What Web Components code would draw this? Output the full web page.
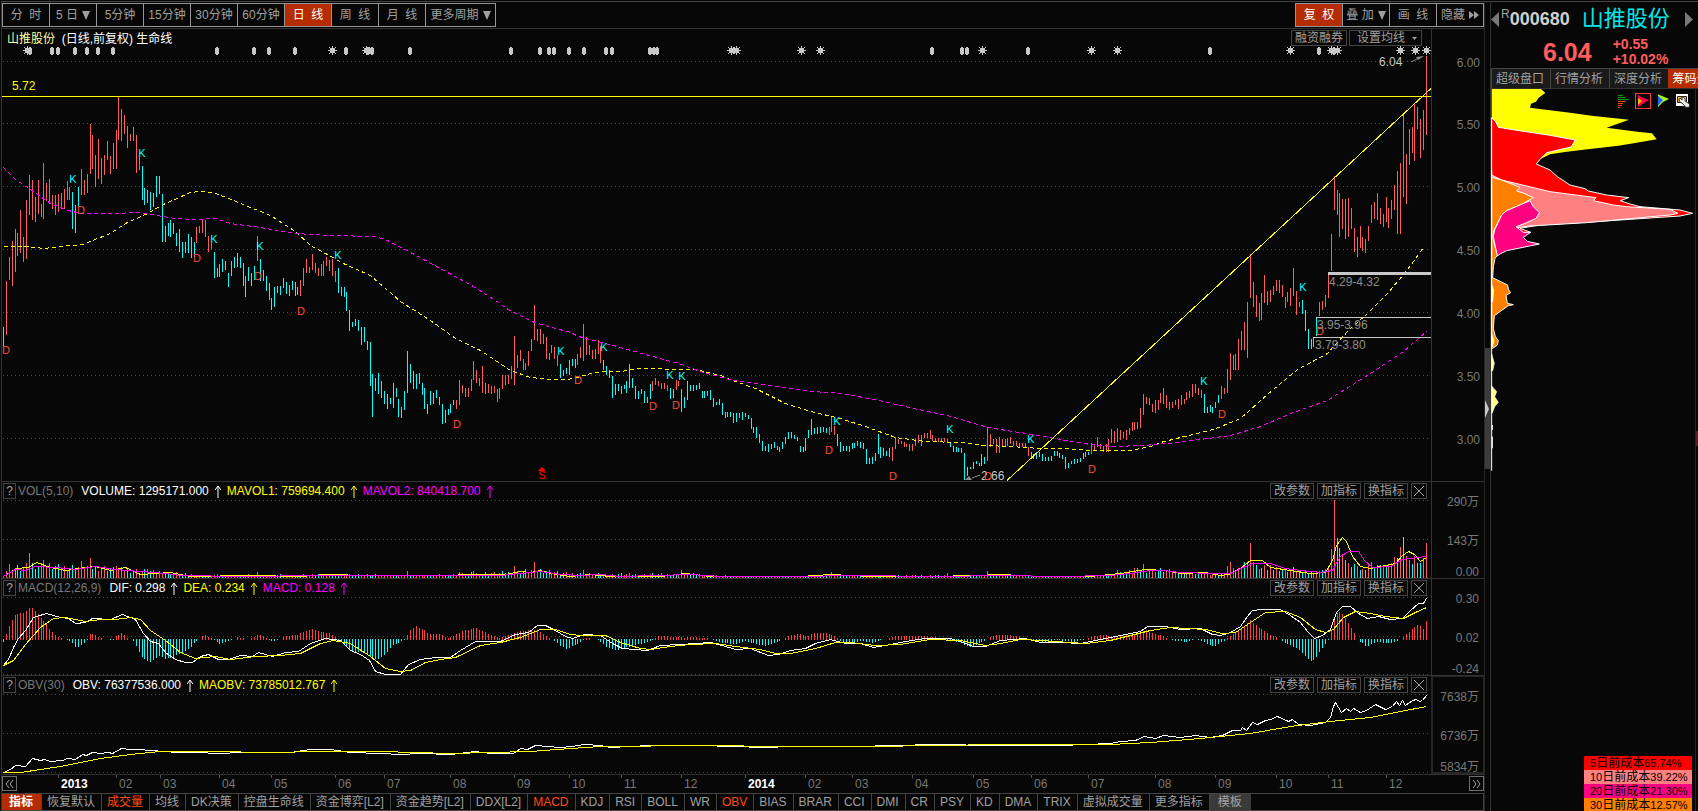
<!DOCTYPE html>
<html lang="zh-CN">
<head>
<meta charset="utf-8">
<title>山推股份 000680 日线</title>
<style>
html,body{margin:0;height:100%;background:#070707;overflow:hidden}
body{font:12px/14px "Liberation Sans","Noto Sans CJK SC",sans-serif;color:#a0a0a0}
</style>
</head>
<body>
<stock-terminal></stock-terminal>
<script>
const RESET = `*{box-sizing:border-box}button,a{font:inherit;color:inherit}button{margin:0;padding:0;cursor:pointer}`;
function define(name, css, render) {
  customElements.define(name, class extends HTMLElement {
    constructor() {
      super();
      this.attachShadow({ mode: 'open' });
    }
    connectedCallback() {
      this.shadowRoot.innerHTML = `<style>${RESET}${css}</style>${render(this)}`;
    }
  });
}

/* ---------- chart data ---------- */
const PRICE = `C 327 347 R 281 335 257 280 241 286 229 272 233 256 210 253 237 262 200 259 175 215 180 220 197 222 180 214 204 217 163 219 183 201 179 204 195 209 195 215 194 212 193 209 189 209 181 200 187 200
C 192 229 205 233 187 206 R 169 195 180 195 174 193 124 174 135 169 155 187 139 179 158 184 155 175 141 160 156 174 143 169 130 169 97 140 109 141 115 134 126 148 134 141 127 141 135 173 157 170
C 166 200 188 205 190 203 192 210 193 207 176 197 176 194 194 242 226 242 223 236 220 237 223 234 233 246 229 252 242 258 242 253 234 253 237 258 242 257
R 227 243 226 233 220 233 220 237 236 252 243 249 C 252 278 268 277 264 277 259 272 261 270 273 287 261 276 257 268 253 267 257 268 263 286 276 297 267 281 273 286 266 280 R 236 261
C 259 281 270 281 276 291 283 300 298 310 287 307 286 293 286 295 278 288 282 294 285 296 281 290 282 296 287 295 R 280 296 268 286 259 273 267 273 254 270 263 273 268 276 264 276 261 276 257 266 260 271 259 276 271 282
C 268 293 287 296 287 297 292 311 310 331 322 327 319 326 320 331 327 345 327 342 341 350 342 386 374 417 378 391 373 394 381 398 391 404 394 409 398 404 383 408 388 397 399 417 407 418 391 410 351 393 364 383 371 389 374 389 373 384 383 395 388 409 404 414 391 405 393 404 390 398 397 405 404 424 410 423 409 415 404 413 400 405
R 400 409 380 405 385 393 388 397 388 397 379 391 361 380 370 383 378 386 366 393 383 394 384 393 386 394 386 393 389 402 388 399 375 389 375 385 375 384 366 379 336 385 355 368 350 361 359 370 363 370 351 366 339 351 305 340 329 341 329 344 334 344 337 359 353 360 345 353 347 359 355 366
C 364 378 370 376 368 374 360 375 359 366 359 368 R 354 365 347 358 324 361 337 355 345 355 350 359 349 359 340 354 346 363 C 360 370 366 375 370 378 376 398 384 395 384 391 386 394 385 389 381 393 364 388 378 388 386 399 391 399 389 394 391 403 397 403 384 399
R 381 391 378 385 381 386 383 389 383 389 385 391 C 388 399 389 398 R 380 390 381 386 C 389 412 397 408 381 400 385 391 385 391 385 390 383 389 391 398 391 398 391 396 390 400 398 407 402 405 399 405 403 415 412 418 412 417 412 417 413 423 413 422 413 418 412 420 413 417 415 419 418 429 427 433 427 438 434 443 441 451 446 451 444 452 444 449 442 448 446 450 447 452 442 449 437 444 432 439 432 438 435 439 437 441 446 452 447 452 438 451 430 438 419 435 428 434 427 434 427 433 427 432 428 433
R 427 435 417 432 426 435 C 434 446 442 452 446 451 446 451 446 452 443 449 443 448 441 446 442 448 443 449 449 464 458 464 457 464 453 461 434 454 447 458 448 456 451 456 448 457
R 447 461 437 449 439 444 441 444 442 447 444 447 444 451 444 451 439 446 435 443 435 446 433 438 433 438 430 439 435 441 438 441 438 442 438 442 438 442 439 442
C 442 447 446 452 447 452 448 452 448 453 453 480 467 476 467 469 462 469 461 464 463 466 454 466 457 464 R 427 461 434 447 439 444 439 453 437 453 439 447 439 447 438 446 437 444 441 446 441 446 443 447 443 447 443 448 447 456
C 452 458 454 459 452 459 452 457 454 461 457 461 457 461 456 461 451 456 451 456 453 458 455 459 457 469 463 468 461 464 459 464 459 463 458 462 453 459 452 457 452 455
R 443 454 444 450 437 447 444 449 446 452 444 452 439 452 429 443 431 443 428 442 430 440 432 438 430 440 428 435 422 431 422 430 422 429 408 428 394 415 397 404 398 405 404 412 400 413 400 410 393 403 388 404 395 408 402 410 402 408 400 405 399 409 395 405 399 404 392 400 391 398 384 397 384 393 388 395 390 398
C 394 413 407 413 405 412 407 413 402 408 395 403 R 386 399 388 394 369 393 353 380 355 370 354 370 339 370 331 350 322 350 302 358 254 298 282 307 295 317 303 321 293 320 275 303 291 305 290 302 286 295 280 291 280 293 285 297 297 308 292 302 288 306 268 296 291 315 302 307
C 300 314 310 331 329 349 339 349 337 347 317 336 R 302 316 301 310 295 307 274 298 234 271 176 210 190 215 193 237 199 229 199 239 198 237 208 229 228 252 237 257 226 248 237 251 239 253 226 241 205 223 202 219 193 220 208 224 214 227 197 222 208 228 200 219 185 210 171 234 163 234 115 197 154 204 129 165 127 153 104 161 107 129 119 158 110 150 56 135`;
const MA_YELLOW = '3,246 24,246 44,248 60,246 82,244 92,240 110,233 125,223 145,214 165,203 190,192 200,191 213,192 228,198 250,207 270,215 295,231 310,245 325,253 345,264 370,275 400,301 430,320 455,338 480,350 510,370 530,377 550,379 567,379 577,377 590,373 605,371 620,371 640,368 655,368 670,369 695,369 720,375 735,381 755,388 785,403 810,411 840,418 865,426 895,437 925,441 960,442 985,445 1010,446 1040,448 1065,448 1090,450 1130,450 1150,446 1160,442 1180,437 1213,429 1240,418 1267,394 1297,369 1327,353 1333,346 1350,328 1367,313 1387,293 1404,273 1413,261 1423,247';
const MA_MAGENTA = '3,167 15,179 30,189 50,203 68,210 80,213 110,213 140,212 150,214 175,218 195,219 215,218 230,223 260,227 295,233 330,235 375,236 387,240 412,253 449,273 473,286 498,302 509,310 534,322 570,332 578,336 605,343 645,354 678,363 703,372 733,380 762,384 812,391 842,393 878,400 918,409 951,416 987,427 1038,435 1060,439 1090,444 1113,446 1143,445 1167,443 1200,439 1230,435 1260,426 1293,412 1327,400 1370,373 1403,351 1426,331';
const K_MARKS = [[73,179],[142,153],[214,239],[260,246],[338,255],[561,351],[604,347],[670,375],[682,376],[837,421],[950,429],[1031,439],[1204,381],[1303,287]];
const D_MARKS = [[81,210],[197,258],[6,350],[258,276],[301,311],[457,424],[578,380],[653,406],[676,405],[829,450],[893,476],[988,476],[1092,469],[1222,414],[1320,331]];
const STARS = [27,332,366,731,736,801,820,982,1091,1117,1290,1331,1337,1400,1415,1426];
const DIAMONDS = [30,52,58,75,87,98,113,217,254,269,295,346,368,372,410,511,540,549,554,569,584,606,612,650,654,657,932,962,967,1028,1210,1319,1334];
const VOL_LEVEL = [[3,4],[9,13],[20,10],[35,15],[60,11],[90,12],[110,10],[125,9],[150,7],[175,5],[200,3],[300,3],[320,4],[370,3],[440,3],[480,5],[510,6],[540,9],[560,5],[600,4],[690,4],[730,2],[830,2],[960,3],[1020,2],[1090,2],[1120,5],[1140,9],[1165,8],[1180,6],[1220,4]];
const VOL_SPIKES = {9:25,14:18,27:17,30:20,39:12,50:9,88:6,134:2,140:7,158:6,163:7,177:12,184:16,201:8,235:8,287:6,327:5,341:7,386:8,392:10,395:14};
const VOL_TAIL = 'R12 R16 R10 C8 R10 R11 C16 R16 R35 R16 C13 R9 C10 R13 C8 R13 C8 R11 C7 C9 R8 C6 R9 C11 R7 C8 C5 R7 C5 C6 R4 R7 R7 C8 R9 R10 R29 R78 C40 C30 R24 C18 R15 C11 C14 R12 C8 R9 C8 R13 R16 C11 C13 C13 R12 C12 R14 R15 R21 C20 R31 C41 R22 R18 C14 R22 C15 C15 R20 R35'.split(' ');
const MAVOL1 = '3,576 16,568 28,567 36,562 50,567 65,570 85,567 95,566 110,570 125,567 140,574 170,572 190,576 250,575 300,576 325,574 370,575 400,575 440,575 475,574 505,574 520,571 530,572 540,570 550,573 570,576 590,574 610,576 660,576 685,573 710,576 800,576 830,574 870,576 930,576 975,575 1000,574 1040,576 1090,576 1120,573 1145,569 1165,570 1180,573 1205,572 1220,575 1228,574 1240,568 1250,560 1262,560 1270,567 1290,570 1310,573 1325,572 1332,560 1336,545 1342,537 1346,541 1352,556 1360,566 1370,568 1395,563 1402,555 1408,551 1414,554 1420,561 1426,557';
const MAVOL2 = '3,576 15,569 25,570 35,566 55,567 75,569 95,566 115,569 140,571 165,573 180,575 240,576 320,575 380,575 440,575 500,575 520,573 540,571 560,574 580,575 600,574 620,576 690,574 720,576 800,576 850,575 940,576 1000,575 1060,576 1110,575 1130,573 1150,570 1163,570 1180,572 1215,573 1230,573 1245,566 1252,563 1270,563 1285,568 1300,570 1320,572 1332,570 1340,556 1348,551 1358,551 1364,560 1372,567 1390,566 1402,559 1426,556';
const MACD_HIST = [[3,-3],[6,5],[9,13],[14,23],[18,26],[22,25],[26,28],[30,32],[33,31],[36,27],[40,22],[45,16],[50,9],[55,4],[59,1],[65,0],[70,-2],[76,-9],[82,-6],[88,0],[90,5],[94,4],[100,1],[106,0],[112,-2],[116,3],[122,6],[127,1],[133,-2],[138,-11],[143,-20],[150,-23],[155,-20],[160,-16],[165,-20],[172,-18],[180,-15],[190,-9],[197,-1],[204,4],[213,0],[219,-5],[228,-2],[238,2],[245,0],[252,1],[258,5],[265,2],[272,-3],[280,0],[285,3],[297,4],[302,7],[312,10],[320,7],[330,6],[336,1],[342,-4],[350,-12],[365,-14],[377,-21],[385,-15],[392,-7],[402,-2],[406,0],[408,7],[415,13],[424,9],[428,5],[440,5],[447,1],[455,4],[463,8],[475,11],[485,7],[492,3],[500,1],[510,5],[520,8],[533,9],[540,7],[548,1],[554,-2],[560,-7],[567,-10],[575,-6],[582,-2],[585,1],[597,0],[607,-9],[617,-11],[627,-8],[640,-5],[652,-1],[658,3],[678,2],[684,1],[690,2],[705,1],[713,-1],[722,-4],[735,-5],[745,-2],[755,-5],[765,-7],[775,-4],[783,0],[790,4],[800,5],[806,2],[812,6],[825,6],[835,3],[840,-2],[850,-4],[862,-2],[872,-4],[880,-1],[886,0],[895,3],[925,3],[940,1],[948,-1],[960,-4],[970,-8],[980,-4],[987,0],[995,4],[1010,4],[1020,2],[1030,-1],[1045,-3],[1057,-1],[1075,-3],[1088,1],[1100,4],[1115,3],[1130,4],[1145,9],[1155,5],[1165,2],[1170,-1],[1185,-3],[1195,0],[1203,-3],[1213,-8],[1225,-1],[1230,3],[1240,9],[1250,19],[1258,12],[1270,4],[1278,1],[1285,-4],[1298,-10],[1310,-22],[1314,-21],[1322,-9],[1329,0],[1333,18],[1338,28],[1343,24],[1350,13],[1357,0],[1366,-8],[1375,-3],[1390,-4],[1398,-2],[1403,2],[1412,10],[1418,15],[1423,10],[1426,18]];
const DIF = '3,665 8,659 13,647 18,638 25,630 33,617 46,613 60,617 68,618 75,623 85,622 92,618 110,619 122,614 135,619 143,633 150,641 158,643 165,652 175,659 185,662 192,662 200,656 208,654 218,659 228,659 240,655 252,656 258,652 272,656 285,652 298,651 310,643 325,638 340,640 350,650 360,654 369,660 375,671 385,674 400,674 408,664 420,659 435,657 450,657 460,650 475,641 500,641 515,634 528,632 537,625 545,625 555,630 565,636 572,638 584,634 600,635 612,643 622,648 647,650 660,645 680,644 710,642 722,645 735,649 750,648 768,655 778,654 790,650 805,648 815,643 830,639 845,643 860,643 873,647 890,644 905,641 925,638 950,638 965,643 973,646 985,646 1000,640 1025,638 1040,642 1060,642 1080,643 1100,639 1115,636 1130,633 1140,631 1147,626 1165,626 1180,629 1200,628 1212,634 1220,635 1230,632 1240,626 1247,616 1252,610 1262,609 1280,609 1290,615 1300,622 1307,631 1314,638 1322,635 1330,629 1336,612 1342,606 1350,606 1358,613 1367,618 1378,616 1390,619 1402,618 1410,610 1418,603 1423,603 1426,598';
const DEA = '3,665 13,660 25,644 40,627 53,618 65,617 85,621 100,619 115,619 130,617 140,619 150,630 165,640 180,652 195,658 215,656 230,659 255,656 280,655 300,653 320,643 333,640 350,643 370,656 385,668 400,671 410,670 425,662 440,659 455,657 480,645 500,642 520,637 540,629 555,629 570,634 580,635 605,635 620,642 640,648 650,649 670,646 690,644 715,643 735,646 760,649 775,653 790,653 815,648 835,642 850,642 875,645 900,644 930,639 960,640 985,645 1000,643 1020,639 1040,640 1085,643 1110,640 1130,635 1150,630 1170,627 1205,629 1222,633 1235,632 1250,622 1265,612 1285,611 1300,617 1315,629 1325,632 1333,629 1343,617 1355,611 1370,613 1385,616 1403,618 1415,612 1426,607';
const OBV = '3,772 10,769 15,765 25,766 32,758 36,759 40,760 44,759 50,761 62,760 67,758 75,759 82,754 86,755 92,752 100,753 108,752 112,753 121,748 130,749 138,749 150,750 165,751 175,752 195,752 220,753 240,752 290,752 310,749 330,749 350,752 380,753 400,754 420,753 450,754 475,751 490,753 513,753 520,748 527,749 535,745 560,747 572,746 584,744 600,745 610,747 650,745 700,745 765,747 790,746 850,746 900,745 930,744 1000,745 1060,745 1110,743 1120,741 1135,740 1144,736 1155,738 1163,735 1180,737 1195,735 1210,737 1222,735 1232,730 1240,730 1242,727 1246,730 1252,722 1257,724 1265,720 1270,719 1277,716 1288,721 1292,719 1298,724 1310,725 1325,722 1330,717 1333,706 1335,702 1338,707 1341,712 1346,708 1350,711 1353,708 1360,712 1366,710 1375,704 1385,709 1392,706 1396,701 1399,705 1402,700 1405,705 1412,700 1416,699 1419,701 1422,700 1426,695';
const MAOBV = '3,772 20,772 60,766 100,758 130,754 160,751 210,751 270,752 320,751 380,751 450,753 530,751 570,748 600,746 700,745 785,746 870,746 1000,744 1110,744 1150,742 1200,738 1250,733 1290,726 1330,721 1370,717 1400,711 1426,706';
const MONTHS = [[58,'2013'],[116,'02'],[160,'03'],[219,'04'],[271,'05'],[335,'06'],[384,'07'],[450,'08'],[514,'09'],[569,'10'],[621,'11'],[681,'12'],[745,'2014'],[805,'02'],[852,'03'],[912,'04'],[973,'05'],[1031,'06'],[1088,'07'],[1155,'08'],[1215,'09'],[1276,'10'],[1328,'11'],[1386,'12']];

/* ---------- chart helpers ---------- */
const UP = '#ff5c5c', DOWN = '#00ffff';
const X0 = 2, W = 1429, BARS = 494;
const barX = i => Math.round(3 + i * 1423 / (BARS - 1));
const px = x => ((x - X0) / W * 100).toFixed(3) + '%';
const bar = (x, top, bottom) => `M${x} ${top}h1V${bottom}h-1z`;
const paths = (up, down, upColor = UP) => `<path d="${up}" fill="${upColor}"/><path d="${down}" fill="${DOWN}"/>`;
const line = (points, color, extra = '') => `<polyline points="${points}" transform="translate(0.5 0.5)" fill="none" stroke="${color}" ${extra}/>`;
const grid = ys => ys.map(y => `<path d="M3 ${y}.5H1431" stroke="#4c4c4c" stroke-dasharray="1 3"/>`).join('');
function level(anchors, x) {
  const k = anchors.findIndex(a => a[0] >= x);
  if (k < 0) return anchors[anchors.length - 1][1];
  if (k === 0) return anchors[0][1];
  const [xa, a] = anchors[k - 1], [xb, b] = anchors[k];
  return a + (b - a) * (x - xa) / (xb - xa);
}
function priceBars() {
  let color = 'C', i = 0, high = null;
  const d = { R: '', C: '' };
  for (const t of PRICE.split(/\s+/)) {
    if (t === 'R' || t === 'C') color = t;
    else if (high === null) high = t;
    else { d[color] += bar(barX(i++), high, t); high = null; }
  }
  return paths(d.R, d.C);
}
function volumeBars() {
  const d = { R: '', C: '' };
  for (let i = 0; i < BARS; i++) {
    let c = (i * 7919 % 13) < 7 ? 'R' : 'C', h;
    if (i >= 424) { c = VOL_TAIL[i - 424][0]; h = +VOL_TAIL[i - 424].slice(1); }
    else if (VOL_SPIKES[i]) { h = VOL_SPIKES[i]; c = 'R'; }
    else h = Math.max(2, Math.round(level(VOL_LEVEL, barX(i)) * (0.6 + (i * 37 % 11) / 16)));
    d[c] += bar(barX(i), 578 - h, 578);
  }
  return paths(d.R, d.C);
}
function macdBars() {
  let up = '', down = '';
  for (let i = 0; i < BARS; i++) {
    const x = barX(i), v = Math.round(level(MACD_HIST, x));
    if (v > 0) up += bar(x, 639 - v, 640);
    if (v < 0) down += bar(x, 639, 639 - v);
  }
  return paths(up, down, '#ff4040');
}
const ARROW = '<svg class="up" width="6" height="13" viewBox="0 0 6 13" fill="none" stroke="currentColor" aria-hidden="true"><path d="M3 13V1M0 5L3 1L6 5"/></svg>';
const CARET = '<svg width="8" height="9" viewBox="0 0 8 9" fill="currentColor" aria-hidden="true"><path d="M0 0H8L4 9z"/></svg>';

/* ---------- components ---------- */
define('tool-button', `
:host{display:block;flex:none;width:48px;height:24px;margin-right:-1px}
:host([wide]){width:71px}
:host([active]){z-index:1}
button{width:100%;height:100%;display:flex;align-items:center;justify-content:center;gap:4px;background:none;border:1px solid #969696;white-space:pre}
:host([active]) button{background:#b42c00;color:#fff}
`, el => `<button type="button"><slot></slot>${el.hasAttribute('menu') ? CARET : ''}${el.hasAttribute('more') ? '<svg width="10" height="8" viewBox="0 0 10 8" fill="currentColor" aria-hidden="true"><path d="M0 0L5 4L0 8zM5 0L10 4L5 8z"/></svg>' : ''}</button>`);

define('tool-bar', `
:host{display:flex;justify-content:space-between;height:26px;padding-top:1px}
nav{display:flex;padding-right:1px}
`, () => `<nav><tool-button>分  时</tool-button><tool-button menu>5 日</tool-button><tool-button>5分钟</tool-button><tool-button>15分钟</tool-button><tool-button>30分钟</tool-button><tool-button>60分钟</tool-button><tool-button active>日  线</tool-button><tool-button>周  线</tool-button><tool-button>月  线</tool-button><tool-button wide menu>更多周期</tool-button></nav>
<nav><tool-button active>复  权</tool-button><tool-button menu>叠 加</tool-button><tool-button>画  线</tool-button><tool-button more>隐藏</tool-button></nav>`);

define('price-chart', `
:host{display:grid;grid-template:minmax(0,1fr) / minmax(0,1fr) 53px;border-top:1px solid #333;min-height:0}
.plot{display:grid;grid-template:100% / 100%;min-height:0}
.plot>*{grid-area:1/1}
svg{display:block;width:100%;height:100%;min-height:0;overflow:visible}
.lines{shape-rendering:crispEdges;overflow:hidden}
header{display:flex;justify-content:space-between;align-items:start;align-self:start;padding:1px 9px 0 5px;z-index:1}
h1{margin:0;font:inherit;line-height:19px;color:#fff}
h1 b{font-weight:normal;color:#ffffa0}
.tools{display:flex;gap:2px}
.tools button{height:16px;border:1px solid #444;background:#070707;line-height:14px;padding:0 3px;display:flex;align-items:center;gap:7px}
.tools button+button{padding:0 4px 0 7px}
.axis{border-left:1px solid #333;min-height:0}
text{font-size:12px}
`, () => {
  const py = y => ((y - 29) / 452 * 100).toFixed(3) + '%';
  const text = (x, y, s, color) => `<text x="${px(x)}" y="${py(y + 4)}" fill="${color}">${s}</text>`;
  const mark = (x, y, s, color) => `<text x="${px(x)}" y="${py(y + 4)}" text-anchor="middle" fill="${color}" style="font-size:11px">${s}</text>`;
  const ys = [61, 123, 186, 249, 312, 375, 438];
  const diamonds = DIAMONDS.map(x => `<path d="M${x} 46L${x + 2} 49V53L${x} 56L${x - 2} 53V49z"/>`).join('');
  const stars = STARS.map(x => `<path d="M${x - 2} 48H${x + 3}V53H${x - 2}zM${x} 46h1v9h-1zM${x - 4} 50h9v1h-9zM${x - 3} 47h1v1h-1zM${x + 3} 47h1v1h-1zM${x - 3} 53h1v1h-1zM${x + 3} 53h1v1h-1z"/>`).join('');
  return `<section class="plot"><svg class="lines" viewBox="2 29 1429 452" preserveAspectRatio="none" aria-label="日线走势图">
${grid(ys)}<g fill="#c8c8c8">${diamonds}${stars}</g>
${priceBars()}
${line(MA_YELLOW, '#ffff00', 'stroke-dasharray="4 3"')}${line(MA_MAGENTA, '#ff00ff', 'stroke-dasharray="4 3"')}
<path d="M2 96h1429v1H2z" fill="#ffff00"/>
<path d="M1007 480.500L1431 88.500" stroke="#ffff00" fill="none"/>
<path d="M1328 272h103v3h-103zM1316 317h115v1h-115zM1314 337h117v1h-117z" fill="#c8c8c8"/>
</svg>
<svg aria-hidden="true">${text(12, 86, '5.72', '#ffff00')}${text(1379, 62, '6.04', '#c8c8c8')}${text(981, 476, '2.66', '#c8c8c8')}
${text(1329, 282, '4.29-4.32', '#8c8c8c')}${text(1317, 325, '3.95-3.96', '#8c8c8c')}${text(1315, 345, '3.79-3.80', '#8c8c8c')}
${K_MARKS.map(m => mark(m[0], m[1], 'K', '#00ffff')).join('')}${D_MARKS.map(m => mark(m[0], m[1], 'D', '#ff4a3c')).join('')}${mark(542, 475, 'S', '#ff0000')}</svg>
<svg viewBox="2 29 1429 452" preserveAspectRatio="none" aria-hidden="true"><path d="M1411 62L1419 58M980 475L972 478" stroke="#8c8c8c"/><path d="M1424 56L1418 60L1416 57zM965 480L969 476L972 480z" fill="#8c8c8c"/><path d="M542 467L546 471H538z" fill="#f00"/></svg>
<header><h1><b>山推股份</b>&nbsp; (日线,前复权) 生命线</h1><span class="tools"><button type="button">融资融券</button><button type="button">设置均线 <svg style="width:5px;height:3px" viewBox="0 0 5 3" fill="currentColor" aria-hidden="true"><path d="M0 0H5L2.500 3z"/></svg></button></span></header></section>
<aside class="axis"><svg>${ys.map((y, i) => `<text x="48" y="${py(y + 6)}" text-anchor="end" fill="#787878">${(6 - i / 2).toFixed(2)}</text>`).join('')}</svg></aside>`;
});

const PANELS = {
  vol: { title: 'VOL(5,10)', top: 481, height: 97, values: [['VOLUME: 1295171.000', '#fff'], ['MAVOL1: 759694.400', '#ffff00'], ['MAVOL2: 840418.700', '#ff00ff']],
    ys: [500, 539, 577], labels: ['290万', '143万', '0.00'], draw: () => volumeBars() + line(MAVOL1, '#ffff00') + line(MAVOL2, '#ff00ff') },
  macd: { title: 'MACD(12,26,9)', top: 578, height: 97, values: [['DIF: 0.298', '#fff'], ['DEA: 0.234', '#ffff00'], ['MACD: 0.128', '#ff00ff']],
    ys: [597, 636, 674], labels: ['0.30', '0.02', '-0.24'], draw: () => macdBars() + line(DIF, '#fff') + line(DEA, '#ffff00') },
  obv: { title: 'OBV(30)', top: 675, height: 99, values: [['OBV: 76377536.000', '#fff'], ['MAOBV: 73785012.767', '#ffff00']],
    ys: [694, 733, 772], labels: ['7638万', '6736万', '5834万'], draw: () => line(OBV, '#fff') + line(MAOBV, '#ffff00') }
};
define('indicator-panel', `
:host{display:grid;grid-template:minmax(0,1fr) / minmax(0,1fr) 53px;height:97px;border-top:1px solid #333}
:host([kind=obv]){height:99px}
.main{display:grid;grid-template:18px minmax(0,1fr) / minmax(0,1fr);min-width:0;min-height:0}
header{display:flex;align-items:center;height:18px;padding:0 4px 0 1px;gap:3px;white-space:nowrap}
header button{height:16px;border:1px solid #444;background:none;padding:0 3px;line-height:14px}
header .help{width:13px;padding:0}
header .x{width:16px;padding:0;display:grid;place-items:center}
h2{margin:0 5px 0 -1px;font:inherit;color:#787878}
.values{flex:1;display:flex;gap:6px}
.values span{display:flex;align-items:center;gap:6px}
.plot{display:block;min-height:0;width:100%;height:100%;shape-rendering:crispEdges}
.axis{border-left:1px solid #333;min-height:0}
:host([kind=obv]) .axis{border:2px solid #262626;border-width:1px 1px 2px 2px}
.axis svg{display:block;width:100%;height:100%;overflow:visible}
text{font-size:12px}
`, el => {
  const p = PANELS[el.getAttribute('kind')], start = p.top + 19;
  const centers = [p.top + 21, p.top + 60, p.top + 91];
  return `<section class="main"><header><button type="button" class="help">?</button><h2>${p.title}</h2><span class="values">${p.values.map(v => `<span style="color:${v[1]}">${v[0]} ${ARROW}</span>`).join('')}</span>
<button type="button">改参数</button><button type="button">加指标</button><button type="button">换指标</button><button type="button" class="x" aria-label="关闭"><svg width="10" height="10" viewBox="0 0 10 10" stroke="currentColor"><path d="M0 0L10 10M10 0L0 10"/></svg></button></header>
<svg class="plot" viewBox="2 ${start} 1429 ${p.height - 19}" preserveAspectRatio="none" aria-label="${p.title}">${grid(p.ys)}${p.draw()}</svg></section>
<aside class="axis"><svg>${p.labels.map((t, i) => `<text x="${p.height === 99 ? 46 : 47}" y="${centers[i] - p.top + 3}" text-anchor="end" fill="#787878">${t}</text>`).join('')}</svg></aside>`;
});

define('time-axis', `
:host{display:grid;grid-template:18px / 15px minmax(0,1fr) 15px;border-top:1px solid #333;height:19px}
svg.scale{grid-area:1/1/2/4;width:calc(100% - 53px);height:18px}
button{width:15px;height:15px;margin-top:1px;border:1px solid #6e6e6e;background:#070707;display:grid;place-items:center;z-index:1}
.prev{grid-area:1/1}.next{grid-area:1/3}
text{font-size:12px}
`, () => `<svg class="scale">${MONTHS.map(([x, t]) => `<svg x="${px(x)}" width="40" height="18"><path d="M0 0h1v3h-1z" fill="#555"/><text x="3" y="13" ${t.length > 2 ? 'fill="#fff" font-weight="bold"' : 'fill="#787878"'}>${t}</text></svg>`).join('')}</svg>
<button type="button" class="prev" aria-label="向前"><svg width="9" height="8" viewBox="0 0 9 8" fill="none" stroke="#a0a0a0"><path d="M4 0L1 4L4 8M8 0L5 4L8 8"/></svg></button>
<button type="button" class="next" aria-label="向后"><svg width="9" height="8" viewBox="0 0 9 8" fill="none" stroke="#a0a0a0"><path d="M1 0L4 4L1 8M5 0L8 4L5 8"/></svg></button>`);

define('tab-strip', `
:host{display:block;height:18px}
nav{display:flex;height:18px;border:1px solid #444;border-left:0}
button{flex:none;height:16px;border:0;border-right:1px solid #444;background:none;padding:1px 6px 0 5px;line-height:15px}
.on{color:#ff4a10}
.active{background:#b42c00;color:#fff;font-weight:bold;padding:1px 8px 0 7px}
.pressed{background:#3a3a3a;border:0;padding:1px 9px 0 8px}
`, () => {
  const cls = { '指标': 'active', '成交量': 'on', 'MACD': 'on', 'OBV': 'on', '模板': 'pressed' };
  return `<nav>${['指标','恢复默认','成交量','均线','DK决策','控盘生命线','资金博弈[L2]','资金趋势[L2]','DDX[L2]','MACD','KDJ','RSI','BOLL','WR','OBV','BIAS','BRAR','CCI','DMI','CR','PSY','KD','DMA','TRIX','虚拟成交量','更多指标','模板'].map(t => `<button type="button" class="${cls[t] || ''}">${t}</button>`).join('')}</nav>`;
});

define('chip-profile', `
:host{display:grid;grid-template:auto 1fr auto / minmax(0,1fr);border-right:1px solid #262626;min-height:0;overflow:hidden}
.icons{grid-area:1/1;justify-self:end;display:flex;align-items:center;gap:4px;padding:4px 4px 0 0;z-index:1}
.icons button{width:16px;height:16px;border:1px solid transparent;background:none;display:grid;place-items:center}
.icons .sel{border-color:#ff3c3c}
.chips{grid-area:1/1/4/2;width:205px;height:722px}
ul{grid-area:3/1;justify-self:end;margin:0 3px -1px 0;padding:0;list-style:none;width:108px;color:#000;z-index:1}
li{height:14px;line-height:14px;padding-left:6px;white-space:nowrap}
li span{font-size:11px}
`, () => `<svg class="chips" viewBox="153 267 615 2166" stroke-linejoin="round" aria-label="筹码分布">
<path fill="#ffff00" d="M155 267H303L316 279L296 293L288 305L273 311L270 323L390 338L455 347L567 359L500 383L592 395L636 400L650 418L590 428L535 437L430 449L375 456L330 463L300 478L155 480z"/>
<g stroke="#fff" stroke-width="3">
<path fill="#ff0000" d="M155 353L168 366L175 382L225 390L330 406L406 420L393 441L320 458L300 478L289 492L330 510L352 530L390 555L435 566L445 573L500 585L566 593L541 602L570 612L600 620L720 630L758 640L720 648L660 652L480 664L300 675L240 685L272 697L155 700z"/>
<path fill="#ff8080" d="M155 525L185 540L330 575L468 593L460 602L520 615L560 620L690 628L714 640L690 645L440 668L270 678L228 683L155 690z"/>
<path fill="#ff8000" d="M155 532L185 540L240 562L230 573L252 580L280 593L245 613L200 632L185 645L162 690L158 710L165 740L173 765L165 775L160 800L158 833L203 855L205 868L212 878L198 886L202 910L220 914L205 917L163 947L160 985L166 1010L175 1022L172 1035L158 1045H155z"/>
<path fill="#ff0080" d="M270 602L280 620L298 638L288 655L255 670L228 680L250 697L272 697L250 712L262 724L298 732L200 752L180 762L172 768L160 710L164 690L185 645L200 632L245 613z"/>
<path fill="#ffff80" stroke-width="2" d="M155 855L161 870L158 905H155zM155 1000L162 1020L158 1040H155zM155 1062L163 1090L158 1112H155zM155 1158L170 1175L164 1190L175 1207L164 1220L156 1240z"/>
<path fill="none" d="M155 510V1412M157 1275V1290M157 1310V1345"/></g></svg>
<div class="icons">
<button type="button" aria-label="筹码一"><svg width="12" height="14" viewBox="0 0 12 14" shape-rendering="crispEdges"><path d="M0 0h1v14h-1z" fill="#0000a0"/><path d="M1 1h5v1h-5zM1 3h8v1h-8zM1 5h11v1h-11z" fill="#009a00"/><path d="M1 7h8v1h-8zM1 9h5v1h-5zM1 11h4v1h-4zM1 13h2v1h-2z" fill="#f04810"/></svg></button>
<button type="button" class="sel" aria-label="筹码二"><svg width="12" height="14" viewBox="0 0 12 14"><path d="M0 0L4 3L12 6L4 11L0 14z" fill="#ff0050"/><path d="M0 3L5 7L0 12z" fill="#ffb000"/><path d="M0 0h1v14h-1z" fill="#0000a0"/></svg></button>
<button type="button" aria-label="筹码三"><svg width="12" height="14" viewBox="0 0 12 14"><path d="M0 0L5 2L12 5L6 8L0 14z" fill="#a0ff10"/><path d="M0 1L6 6L0 13z" fill="#2860ff"/><path d="M0 0h1v14h-1z" fill="#0000a0"/></svg></button>
<button type="button" aria-label="设置"><svg width="14" height="14" viewBox="0 0 14 14"><path d="M0 0H12V12H0z" fill="#fff"/><path d="M1.500 2.500H10.500V8.500H1.500z" fill="#ffb030" stroke="#222"/><path d="M4 4A3 3 0 0 0 6 9L10 13.500L13.500 13V10L9 7A3 3 0 0 0 6 3V6z" fill="#e8e8e8" stroke="#333"/></svg></button></div>
<ul><li style="background:#f00"><span>5</span>日前成本<span>65.74%</span></li><li style="background:#ff8080"><span>10</span>日前成本<span>39.22%</span></li><li style="background:#ff0080"><span>20</span>日前成本<span>21.30%</span></li><li style="background:#ff8000"><span>30</span>日前成本<span>12.57%</span></li></ul>`);

define('quote-panel', `
:host{display:grid;grid-template:66px 21px minmax(0,1fr) / minmax(0,1fr);border-left:1px solid #333;min-width:0}
.head{display:grid;grid-template:34px 32px / 8px 1fr 8px;padding-right:5px;align-items:center}
.head>button{border:0;background:none;height:15px;display:block}
.head svg{display:block}
h1{margin:0;display:flex;align-items:center;font-weight:normal;white-space:nowrap;line-height:24px}
sup{font-size:12px;line-height:14px;align-self:start;margin-left:2px}
h1 b{font-size:18px;color:#d0d0d0}
h1 span{font-size:22px;color:#00e8e8;margin-left:12px}
.price{grid-column:1/4;display:flex;align-items:center;gap:21px;color:#ff5c5c;font-weight:bold;padding-left:52px}
.price strong{font-size:25px;line-height:28px}
.price span{font-size:14px;line-height:15px}
nav{display:flex;overflow:hidden;border-top:1px solid #444;border-bottom:1px solid #333}
nav button{flex:none;width:59px;border:0;border-left:1px solid #444;background:#1a1a1a;padding-right:2px}
nav .on{background:#b42c00;color:#fff;border:0}
.body{display:grid;grid-template:100% / minmax(0,1fr) 1px;padding-right:1px}
.body i{width:2px;height:15px;background:#5a2020;margin-top:342px}
`, () => `<section class="head"><button type="button" aria-label="上一只"><svg width="8" height="15" viewBox="0 0 8 15" fill="#787878"><path d="M8 0V15L0 7.500z"/></svg></button>
<h1><sup>R</sup><b>000680</b><span>山推股份</span></h1>
<button type="button" aria-label="下一只"><svg width="8" height="15" viewBox="0 0 8 15" fill="#787878"><path d="M0 0V15L8 7.500z"/></svg></button>
<div class="price"><strong>6.04</strong><span>+0.55<br>+10.02%</span></div></section>
<nav><button type="button">超级盘口</button><button type="button">行情分析</button><button type="button">深度分析</button><button type="button" class="on">筹码分布</button></nav>
<div class="body"><chip-profile></chip-profile><i></i></div>`);

define('side-splitter', `
:host{display:grid;grid-template-rows:346fr 121px 342fr}
div{grid-row:2;background:#3c3c3c;display:flex;align-items:center}
`, () => `<div><svg width="4" height="18" viewBox="0 0 4 18" fill="#c8c8c8" aria-hidden="true"><path d="M0 0L4 9L0 18z"/></svg></div>`);

define('stock-terminal', `
:host{display:grid;grid-template-columns:minmax(0,1fr) 5px 208px;grid-template-rows:minmax(0,1fr);height:100vh;padding-top:1px;box-sizing:border-box}
.left{display:grid;grid-template-columns:minmax(0,1fr);grid-template-rows:26px minmax(0,1fr) auto auto auto 19px 18px;margin-left:1px;border-left:1px solid #333;border-right:1px solid #262626;border-top:1px solid #444;min-height:0}
side-splitter,quote-panel{border-top:1px solid #444;min-height:0;box-sizing:border-box}
`, () => `<main class="left"><tool-bar></tool-bar><price-chart></price-chart><indicator-panel kind="vol"></indicator-panel><indicator-panel kind="macd"></indicator-panel><indicator-panel kind="obv"></indicator-panel><time-axis></time-axis><tab-strip></tab-strip></main><side-splitter></side-splitter><quote-panel></quote-panel>`);
</script>
</body>
</html>
